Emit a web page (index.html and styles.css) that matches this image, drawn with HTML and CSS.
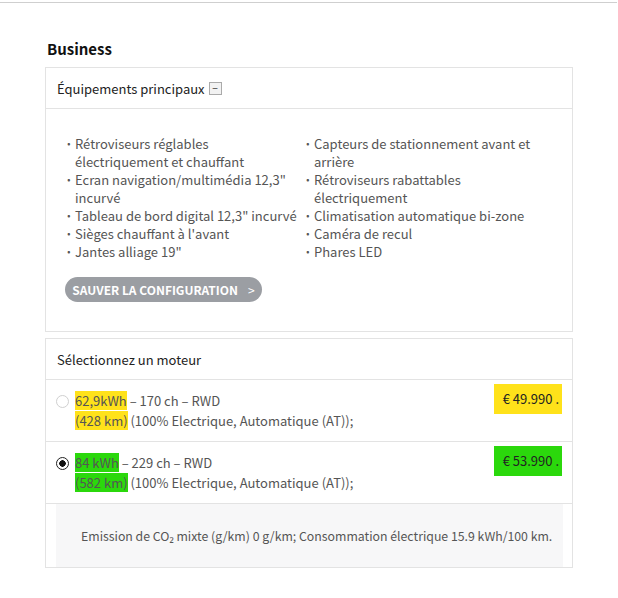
FILE: index.html
```html
<!DOCTYPE html>
<html lang="fr">
<head>
<meta charset="utf-8">
<link rel="stylesheet" href="styles.css">
</head>
<body>
<div class="top-rule"></div>
<main class="page">
  <h2 class="title">Business</h2>

  <section class="card">
    <div class="card-head">Équipements principaux <span class="toggle">−</span></div>
    <div class="card-body">
      <div class="cols">
        <ul class="list">
          <li>Rétroviseurs réglables électriquement et chauffant</li>
          <li>Ecran navigation/multimédia 12,3" incurvé</li>
          <li>Tableau de bord digital 12,3" incurvé</li>
          <li>Sièges chauffant à l'avant</li>
          <li>Jantes alliage 19"</li>
        </ul>
        <ul class="list">
          <li>Capteurs de stationnement avant et arrière</li>
          <li>Rétroviseurs rabattables électriquement</li>
          <li>Climatisation automatique bi-zone</li>
          <li>Caméra de recul</li>
          <li>Phares LED</li>
        </ul>
      </div>
      <button class="save">SAUVER LA CONFIGURATION <span class="chev">&gt;</span></button>
    </div>
  </section>

  <section class="card card-engine">
    <div class="card-head">Sélectionnez un moteur</div>
    <div class="option">
      <span class="radio"></span>
      <div class="opt-text">
        <div><span class="hl-y">62,9kWh</span> – 170 ch – RWD</div>
        <div><span class="hl-y">(428 km)</span> (100% Electrique, Automatique (AT));</div>
      </div>
      <div class="price hl-y">€ 49.990 .</div>
    </div>
    <div class="option">
      <span class="radio checked"></span>
      <div class="opt-text">
        <div><span class="hl-g">84 kWh</span> – 229 ch – RWD</div>
        <div><span class="hl-g">(582 km)</span> (100% Electrique, Automatique (AT));</div>
      </div>
      <div class="price hl-g">€ 53.990 .</div>
    </div>
    <div class="emission">Emission de CO₂ mixte (g/km) 0 g/km; Consommation électrique 15.9 kWh/100 km.</div>
  </section>
</main>
</body>
</html>
```

FILE: styles.css
```css
* { box-sizing: border-box; }
body {
  margin: 0;
  background: #fff;
  font-family: "Noto Sans CJK KR", "Noto Sans", sans-serif;
  color: #555;
}
.top-rule {
  margin-top: 2px;
  height: 1px;
  width: 617px;
  background: #cfcfcf;
}
.page {
  padding-left: 45px;
  width: 573px;
}
.title {
  margin: 34px 0 0 2px;
  font-size: 15px;
  line-height: 24px;
  font-weight: 700;
  color: #111;
}
.card {
  margin-top: 6px;
  border: 1px solid #e3e3e3;
}
.card-engine { margin-top: 6px; }
.card-head {
  height: 41px;
  padding-left: 11px;
  display: flex;
  align-items: center;
  gap: 4px;
  font-size: 13px;
  color: #222;
  border-bottom: 1px solid #e3e3e3;
}
.toggle {
  display: inline-flex;
  align-items: center;
  justify-content: center;
  width: 13px;
  height: 13px;
  border: 1px solid #aaa;
  background: #f2f2f2;
  font-size: 10px;
  line-height: 1;
  color: #333;
}
.card-body {
  padding: 26px 19px 29px 19px;
}
.cols {
  display: grid;
  grid-template-columns: 239px 1fr;
}
.list {
  margin: 0;
  padding: 0;
  list-style: none;
  font-size: 13px;
  line-height: 18px;
  color: #555;
}
.list li {
  position: relative;
  padding-left: 10px;
}
.list li::before {
  content: "·";
  position: absolute;
  left: 0;
  top: 0;
  font-weight: 700;
}
.save {
  margin-top: 16px;
  height: 25px;
  width: 197px;
  border: none;
  border-radius: 13px;
  background: #9b9ea3;
  color: #fff;
  font-family: "Noto Sans CJK KR", sans-serif;
  font-weight: 700;
  font-size: 12px;
  letter-spacing: 0;
  padding: 0;
  display: flex;
  align-items: center;
  justify-content: center;
  gap: 10px;
}
.chev { font-weight: 400; }
.option {
  display: flex;
  align-items: flex-start;
  height: 62px;
  padding: 11px 10px 0 10px;
  border-bottom: 1px solid #e3e3e3;
  font-size: 13px;
  line-height: 20px;
  color: #555;
}
.option:last-of-type { height: 61px; }
.radio {
  flex: none;
  width: 13px;
  height: 13px;
  margin-top: 4px;
  margin-right: 6px;
  border: 1px solid #d0d0d0;
  border-radius: 50%;
  background: #fff;
}
.radio.checked {
  border: 1px solid #222;
  background: radial-gradient(circle, #111 0 3px, #fff 3.5px);
}
.opt-text { flex: 1; }
.price {
  color: #222;
  padding: 5px 3px 5px 9px;
  margin-top: -7px;
}
.hl-y { background: #ffe21a; }
.hl-g { background: #2bd80c; }
.emission {
  margin: 0 9px 0 10px;
  height: 63px;
  background: #f7f7f8;
  display: flex;
  align-items: center;
  padding-left: 25px;
  font-size: 12.3px;
  color: #555;
}
```
